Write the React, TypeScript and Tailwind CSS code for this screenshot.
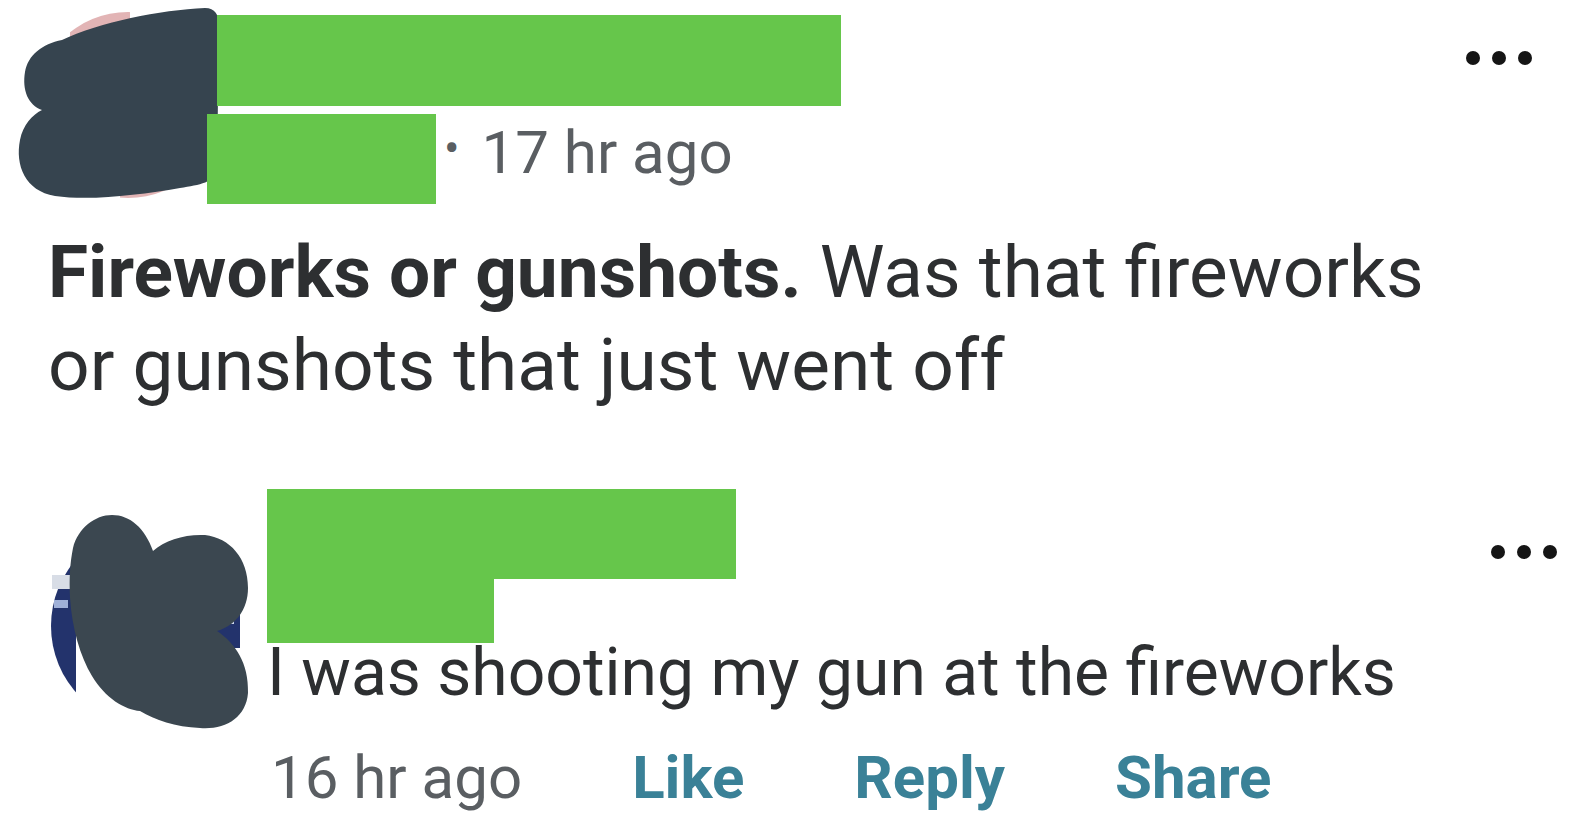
const green = 'bg-[#66c64b]';

function Dots() {
  return (
    <div className="flex gap-[12px]">
      <span className="w-[14px] h-[14px] rounded-full bg-[#151515]" />
      <span className="w-[14px] h-[14px] rounded-full bg-[#151515]" />
      <span className="w-[14px] h-[14px] rounded-full bg-[#151515]" />
    </div>
  );
}

// scribbled-over avatar of the poster
function BlobOne() {
  return (
    <svg width="205" height="196" viewBox="15 8 205 196" className="shrink-0">
      <defs>
        <clipPath id="pinkclip">
          <rect x="70" y="8" width="60" height="32" />
          <rect x="120" y="178" width="80" height="30" />
        </clipPath>
      </defs>
      <circle cx="128" cy="105" r="93" fill="#e2b4b5" clipPath="url(#pinkclip)" />
      <path
        d="M 62 40 C 100 22, 160 10, 205 8 C 215 8, 219 15, 219 25 L 217 170 C 215 182, 200 185, 180 188 C 140 195, 90 201, 55 196 C 25 191, 15 165, 20 140 C 23 125, 32 115, 42 110 C 28 105, 22 90, 25 72 C 28 55, 42 44, 62 40 Z"
        fill="#36444f"
      />
    </svg>
  );
}

// scribbled-over avatar of the commenter
function BlobTwo() {
  return (
    <svg width="207" height="220" viewBox="45 513 207 220" className="shrink-0 mt-[22px]">
      <defs>
        <clipPath id="blueclip">
          <rect x="40" y="565" width="36" height="150" />
          <rect x="205" y="614" width="35" height="36" />
        </clipPath>
      </defs>
      <g clipPath="url(#blueclip)">
        <circle cx="152" cy="628" r="101" fill="#23336c" />
        <rect x="52" y="577" width="20" height="14" fill="#d8dde6" />
        <rect x="54" y="602" width="14" height="8" fill="#9fb0d8" />
        <rect x="214" y="618" width="20" height="8" fill="#cfd8ee" />
      </g>
      <path
        d="M 73 550 C 78 530, 95 517, 112 517 C 130 517, 145 530, 153 553 C 165 542, 185 536, 205 537 C 230 540, 248 560, 248 590 C 248 612, 235 628, 217 633 C 235 645, 249 665, 248 695 C 246 720, 225 732, 200 730 C 175 729, 155 722, 140 713 C 125 712, 105 700, 92 678 C 80 658, 72 630, 70 600 C 69 580, 70 565, 73 550 Z"
        fill="#3b4750"
      />
    </svg>
  );
}

export default function App() {
  return (
    <div className="w-[1580px] h-[840px] bg-white overflow-hidden font-['Roboto',sans-serif]">
      {/* post header */}
      <div className="flex items-start pt-[8px] pl-[15px] pr-[48px]">
        <BlobOne />
        <div className="-ml-[13px] pt-[7px]">
          <div className={`ml-[10px] w-[624px] h-[91px] ${green}`} />
          <div className="flex items-start mt-[8px]">
            <div className={`w-[229px] h-[90px] ${green}`} />
            <span className="ml-[8px] mt-[9px] text-[60px] leading-none text-[#5a5e62]">
              <span className="text-[46px] align-[9px] mr-[22px]">•</span>17 hr ago
            </span>
          </div>
        </div>
        <div className="ml-auto mt-[43px]">
          <Dots />
        </div>
      </div>

      {/* post body */}
      <p className="mt-[22px] pl-[48px] text-[73px] leading-[93px] text-[#2d2f31]">
        <span className="font-bold">Fireworks or gunshots.</span> Was that fireworks
        <br />
        or gunshots that just went off
      </p>

      {/* comment */}
      <div className="flex items-start mt-[77px] pl-[45px] pr-[23px]">
        <BlobTwo />
        <div className="ml-[15px]">
          <div className={`w-[469px] h-[90px] ${green}`} />
          <div className={`w-[227px] h-[64px] ${green}`} />
          <p className="-mt-[3px] text-[66px] leading-none text-[#2d2f31]">
            I was shooting my gun at the fireworks
          </p>
          <div className="flex items-baseline gap-[110px] mt-[42px] ml-[4px] text-[60px] leading-none">
            <span className="text-[#5a5e62]">16 hr ago</span>
            <span className="font-bold text-[#3a8197]">Like</span>
            <span className="font-bold text-[#3a8197]">Reply</span>
            <span className="font-bold text-[#3a8197]">Share</span>
          </div>
        </div>
        <div className="ml-auto mt-[56px]">
          <Dots />
        </div>
      </div>
    </div>
  );
}
